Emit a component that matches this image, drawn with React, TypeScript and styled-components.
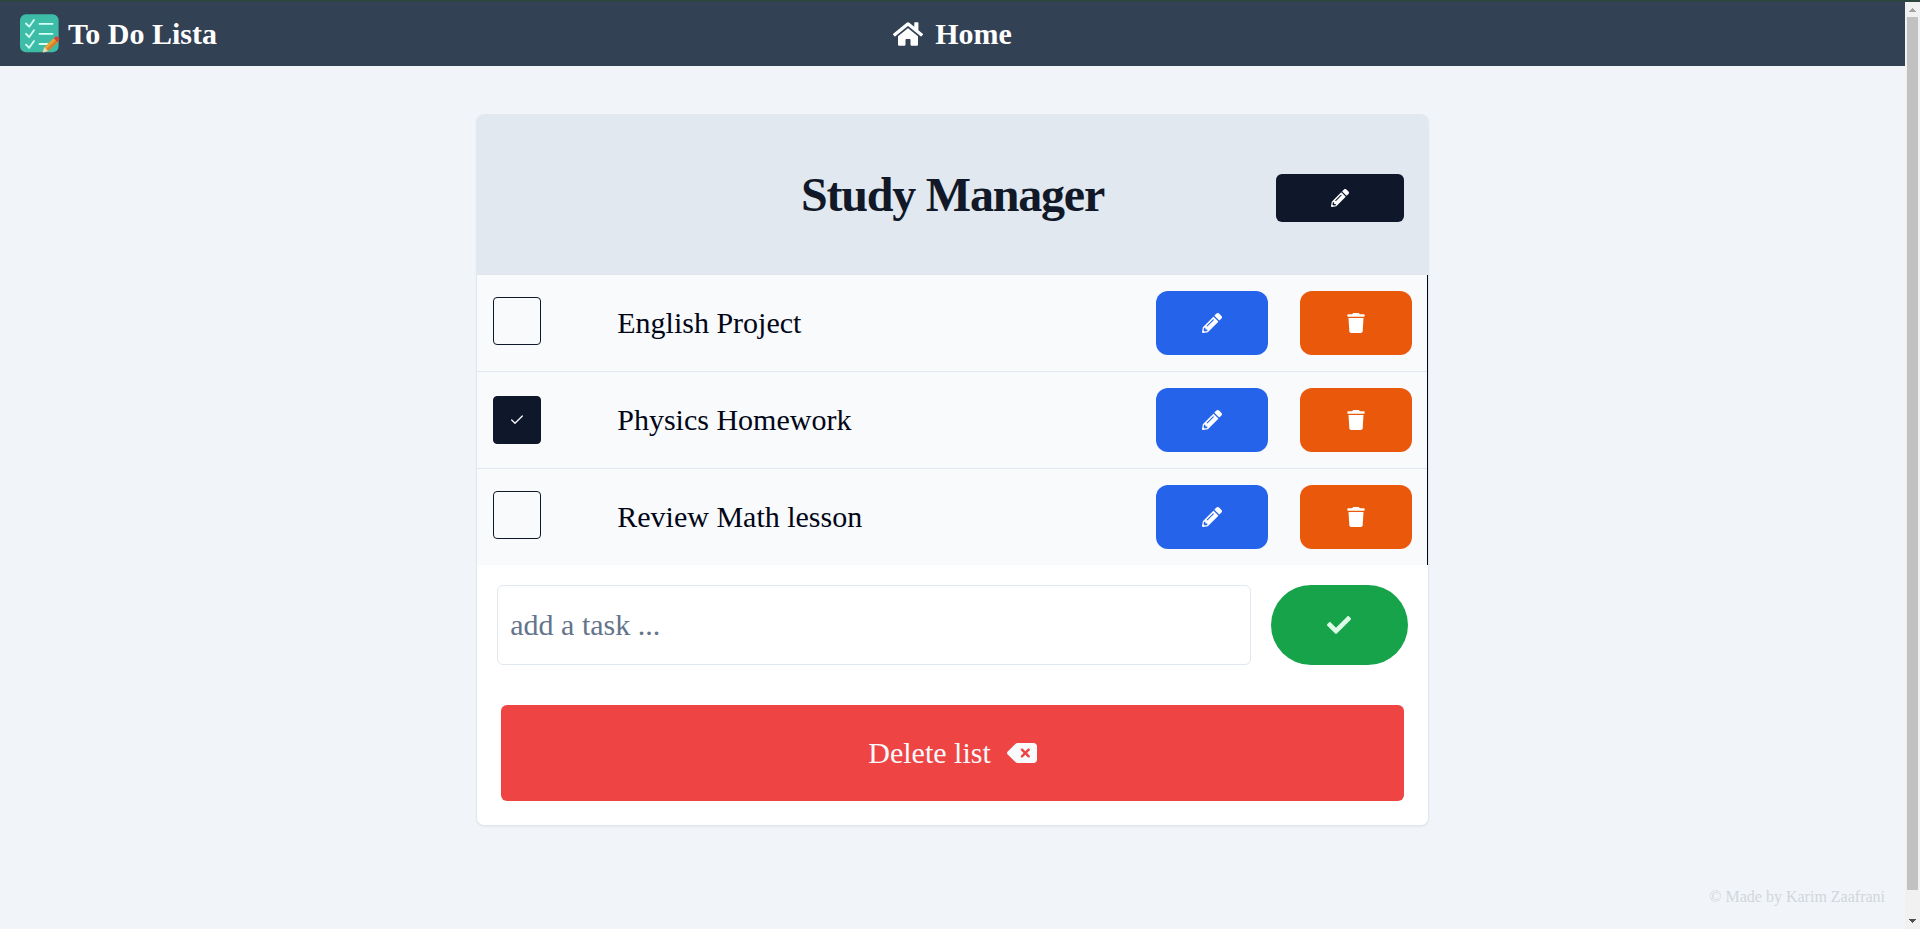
import React from "react";
import styled, { createGlobalStyle, css } from "styled-components";
import { FaHome, FaCheck, FaPencilAlt } from "react-icons/fa";
import { FaTrash, FaDeleteLeft } from "react-icons/fa6";

const GlobalStyle = createGlobalStyle`
  *, *::before, *::after { box-sizing: border-box; }
  html, body { margin: 0; height: 100%; overflow: hidden; }
  body { font-family: "Liberation Serif", "Times New Roman", serif; background: #f1f5f9; color: #020617; }
  button, input { font: inherit; margin: 0; }
  svg { display: block; flex: none; }
`;

const Window = styled.div`
  display: flex;
  height: 929px;
  border-top: 2px solid #2c453f;
`;

const Page = styled.div`
  flex: 1;
  display: flex;
  flex-direction: column;
  align-items: center;
`;

const NavBar = styled.header`
  align-self: stretch;
  height: 64px;
  padding: 0 20px;
  display: grid;
  grid-template-columns: 1fr auto 1fr;
  align-items: center;
  background: #334155;
  color: #fff;
  font-size: 30px;
  font-weight: 700;
  line-height: 36px;
`;

const Brand = styled.div`
  display: flex;
  align-items: center;
  gap: 8px;
`;

const HomeLink = styled.div`
  display: flex;
  align-items: center;
  gap: 12px;
`;

const Card = styled.main`
  width: 50%;
  margin-top: 48px;
  border: 1px solid #e2e8f0;
  border-radius: 8px;
  background: #fff;
  box-shadow: 0 1px 2px rgba(0, 0, 0, 0.05);
`;

const CardHeader = styled.div`
  height: 160px;
  padding: 0 24px;
  display: grid;
  grid-template-columns: 128px 1fr 128px;
  align-items: center;
  background: #e2e8f0;
  border-radius: 6px 6px 0 0;
`;

const Title = styled.h1`
  grid-column: 2;
  margin: 0;
  text-align: center;
  font-size: 48px;
  line-height: 48px;
  font-weight: 800;
  letter-spacing: -1.2px;
  color: #111827;
`;

const ButtonBase = styled.button`
  display: flex;
  align-items: center;
  justify-content: center;
  border: 0;
  padding: 0;
  color: #fff;
`;

const RenameButton = styled(ButtonBase)`
  height: 48px;
  margin-top: 6px;
  border-radius: 6px;
  background: #0f172a;
`;

const TaskList = styled.ul`
  margin: 0;
  padding: 0;
  list-style: none;
  border-right: 1px solid #020617;
  background: #f8fafc;
`;

const TaskRow = styled.li`
  display: flex;
  align-items: center;
  height: 96px;
  padding: 0 15px 0 16px;
  & + & {
    height: 97px;
    border-top: 1px solid #e2e8f0;
  }
`;

const CheckBox = styled.span<{ $checked: boolean }>`
  display: flex;
  align-items: center;
  justify-content: center;
  width: 48px;
  height: 48px;
  border: 1px solid #0f172a;
  border-radius: 4px;
  ${(p) => p.$checked ? css`background: #0f172a; color: #f8fafc;` : css`margin-bottom: 4px;`}
`;

const TaskName = styled.span`
  flex: 1;
  margin-left: 76px;
  font-size: 30px;
  line-height: 36px;
`;

const ActionButton = styled(ButtonBase)<{ $tone: "edit" | "remove" }>`
  width: 112px;
  height: 64px;
  border-radius: 12px;
  background: ${(p) => (p.$tone === "edit" ? "#2563eb" : "#ea580c")};
  & + & { margin-left: 32px; }
`;

const AddRow = styled.form`
  display: flex;
  gap: 20px;
  padding: 20px;
`;

const TaskInput = styled.input`
  flex: 1;
  min-width: 0;
  height: 80px;
  padding: 8px 12px;
  border: 1px solid #e2e8f0;
  border-radius: 6px;
  background: #fff;
  font-size: 30px;
  &::placeholder { color: #64748b; opacity: 1; }
`;

const AddButton = styled(ButtonBase)`
  width: 137px;
  height: 80px;
  border-radius: 40px;
  background: #16a34a;
  color: #dcfce7;
`;

const DeleteButton = styled(ButtonBase)`
  width: calc(100% - 48px);
  height: 96px;
  margin: 20px 24px 24px;
  gap: 16px;
  border-radius: 6px;
  background: #ef4444;
  color: #f8fafc;
  font-size: 30px;
`;

const Footer = styled.footer`
  align-self: flex-end;
  margin: auto 20px 23px 0;
  font-size: 16px;
  line-height: 18px;
  color: #d1d5db;
`;

const ScrollTrack = styled.div`
  width: 15px;
  display: flex;
  flex-direction: column;
  align-items: center;
  background: #f1f1f1;
`;

const ScrollThumb = styled.div`
  width: 11px;
  height: 873px;
  margin-bottom: auto;
  background: #c1c1c1;
`;

const LogoIcon = () => (
  <svg width="40" height="40" viewBox="0 0 40 40">
    <rect x="0" y="0.2" width="38.6" height="38" rx="6" fill="#3dbda7" />
    <g fill="none" stroke="#d8fff6" strokeWidth="1.8" strokeLinecap="round" strokeLinejoin="round">
      <path d="M6 9.5l3.2 3.2L14 6M6 19.8l3.2 3.2L14 16.3M6 30.6l3.2 3.2L14 27.1" />
      <path d="M19.5 9.8h13M19.5 19.8h13M19.5 30h8" />
    </g>
    <path d="M24.5 33L34.5 23.5l4 4L28 37z" fill="#eda035" />
    <path d="M26.3 35.2L36.6 25.5l1.9 2L28 37z" fill="#d4802a" />
    <path d="M33.8 24.2l2-1.7q2-.4 3.3 1.2q.9 1.6-.5 3.2l-1.2 1.2z" fill="#c9483c" />
    <path d="M24.5 33L28 37l-6 2z" fill="#f4d5ad" />
    <path d="M22.5 37.6L22 39l1.6-.4z" fill="#374151" />
  </svg>
);

const SmallCheck = () => (
  <svg width="16" height="16" viewBox="0 0 24 24" fill="none" stroke="currentColor" strokeWidth="2" strokeLinecap="round" strokeLinejoin="round">
    <path d="M20 6 9 17l-5-5" />
  </svg>
);

const ScrollArrow = ({ up }: { up?: boolean }) => (
  <svg width="15" height="15" viewBox="0 0 15 15" shapeRendering="crispEdges">
    {up ? <path d="M4 10h7L7.5 6z" fill="#a3a3a3" /> : <path d="M4 5h7L7.5 9z" fill="#505050" />}
  </svg>
);

const tasks = [
  { name: "English Project", done: false },
  { name: "Physics Homework", done: true },
  { name: "Review Math lesson", done: false },
];

export default function App() {
  return (
    <>
      <GlobalStyle />
      <Window>
        <Page>
          <NavBar>
            <Brand><LogoIcon />To Do Lista</Brand>
            <HomeLink><FaHome size={30} />Home</HomeLink>
          </NavBar>
          <Card>
            <CardHeader>
              <Title>Study Manager</Title>
              <RenameButton aria-label="Rename list"><FaPencilAlt size={18} /></RenameButton>
            </CardHeader>
            <TaskList>
              {tasks.map((task) => (
                <TaskRow key={task.name}>
                  <CheckBox $checked={task.done}>{task.done && <SmallCheck />}</CheckBox>
                  <TaskName>{task.name}</TaskName>
                  <ActionButton $tone="edit" aria-label="Edit"><FaPencilAlt size={20} /></ActionButton>
                  <ActionButton $tone="remove" aria-label="Delete"><FaTrash size={20} /></ActionButton>
                </TaskRow>
              ))}
            </TaskList>
            <AddRow>
              <TaskInput placeholder="add a task ..." />
              <AddButton type="button" aria-label="Add"><FaCheck size={24} /></AddButton>
            </AddRow>
            <DeleteButton>Delete list<FaDeleteLeft size={30} /></DeleteButton>
          </Card>
          <Footer>© Made by Karim Zaafrani</Footer>
        </Page>
        <ScrollTrack>
          <ScrollArrow up />
          <ScrollThumb />
          <ScrollArrow />
        </ScrollTrack>
      </Window>
    </>
  );
}
